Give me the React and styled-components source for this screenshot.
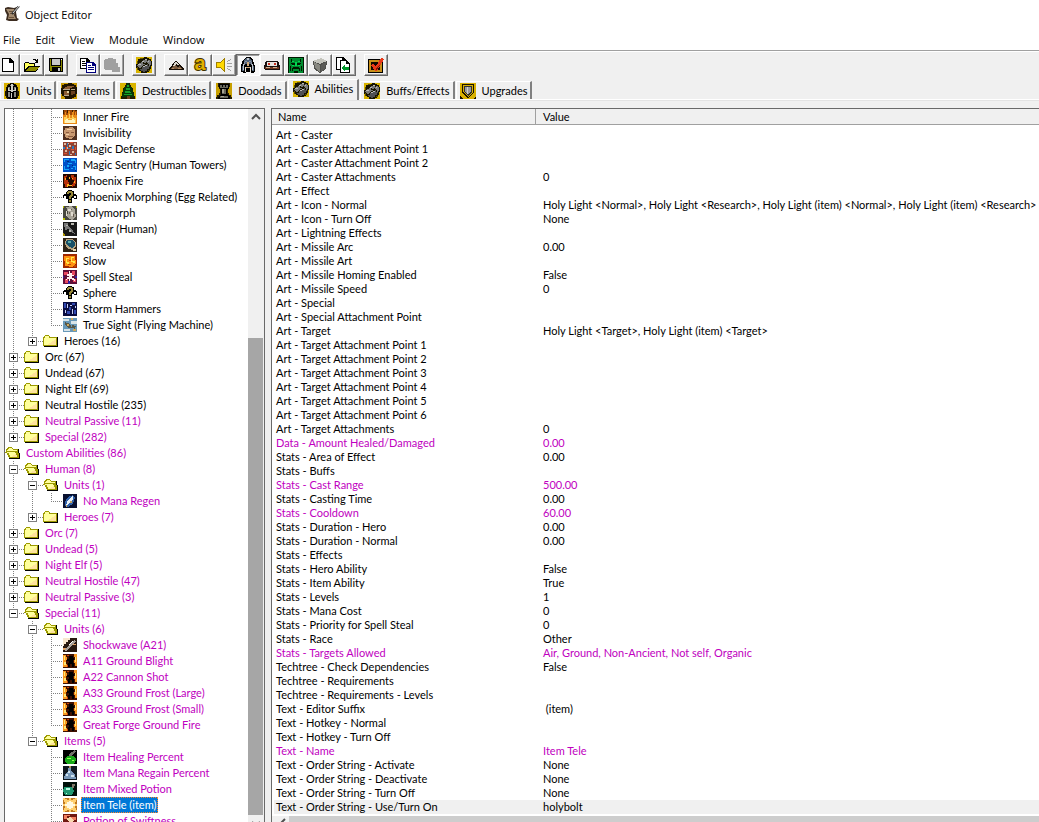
import React, { useState } from "react";
import styled, { createGlobalStyle } from "styled-components";

const OLIVE = "#9c9a00";

/* every drawing is a list of [fill, path] pairs on a small grid */
const toolArt = {
  new: [["#000", "M2 1h8l4 4v10H2z"], ["#fff", "M3 2h6v4h4v8H3z"], ["#000", "M9 2h1v3h3v1H9z"]],
  open: [
    ["#000", "M9 2h3v1h1v-1h1v4h-3v-1h1v-1h-1v-1H9zM0 6h1V5h4v1h6v3h5l-4 6H0z"],
    ["#ffff5a", "M1 6h4v1h5v2H4l-3 4z"],
    ["#8c8a00", "M5 10h10l-3 4H2z"],
  ],
  save: [
    ["#000", "M1 1h14v14H2l-1-1z"],
    ["#8c8a00", "M2 2h1v12H2zM13 3h1v11h-1zM3 9h10v1H3zM3 10h1v4H3z"],
    ["#c8c8c8", "M4 2h8v6H4zM10 11h2v3h-2z"],
    ["#fff", "M13 2h1v1h-1z"],
  ],
  copy: [
    ["#000", "M0 1h7l3 3v8H0z"],
    ["#fff", "M1 2h5v3h3v6H1z"],
    ["#000", "M2 4h3v1H2zM2 6h4v1H2zM2 8h4v1H2z"],
    ["#00007b", "M6 5h7l3 3v8H6z"],
    ["#fff", "M7 6h5v3h3v6H7z"],
    ["#00007b", "M8 8h3v1H8zM8 10h6v1H8zM8 12h6v1H8z"],
  ],
  paste: [["#a0a0a0", "M1 2h3V1h5v1h3v4h2v4h2v5H8v-2H1l-1-1V3z"]],
  fist: [
    ["#181400", "M0 0h16v16H0z"],
    ["#d8b400", "M0 0h8v1H4v1H2v2H1v3H0zM11 0h5v4h-1V2h-2V1h-2zM0 11h1v2h2v1h2v2H0zM15 9h1v7h-5v-1h2v-1h1v-2h1z"],
    ["#605000", "M4 1h3v1H4zM1 4h1v3H1zM14 4h1v3h-1zM1 10h1v3H1zM12 13h2v1h-2z"],
    ["#787878", "M1 8h1V7h1V6h2V5h2v2h2v1H7v1H6v1H5v1H3v-1H2V9H1zM6 4h1V3h2V2h2v2h1v1h-2v1H8V5H6zM12 3h2v1h1v4h-1v1h-1V7h-1V6h-1V5h1z"],
    ["#505054", "M6 10h1V9h2V8h2V7h1v2h2v1h-1v2h-2v2H9v1H7v-1H5v-1H4v-1h2z"],
    ["#b8b8b8", "M2 7h3v1H2zM6 4h2v1H6zM9 2h2v1H9zM12 4h1v1h-1zM7 9h2v1H7zM9 8h2v1H9z"],
  ],
  hill: [
    ["#181008", "M0 12l4-4 3-4h2l3 4 4 4-1 1H1z"],
    ["#7b5c40", "M2 12l3-3 2-1 2 2 3-1 2 3z"],
    ["#dcd8d0", "M7 5h2l2 3H9L8 7 6 9H5z"],
    ["#b48c64", "M4 11h2v1H4zM10 11h3v1h-3z"],
  ],
  sound: [
    ["#a08000", "M0 5h4l5-4v14l-5-4H0z"],
    ["#ffd800", "M1 6h3l4-3v10l-4-3H1z"],
    ["#a0a0a0", "M11 4h1V3h2V2h1v1h-1v1h-2v1h-1zM11 6h5v1h-5zM11 9h5v1h-5zM11 11h1v1h2v1h1v1h-1v-1h-2v-1h-1z"],
  ],
  helmet: [
    ["#000", "M3 3l3-3h4l3 3 2 6v6l-3 1-3-1H7l-3 1-3-1V9z"],
    ["#546478", "M4 4l2-3h4l2 3v3H4zM2 9h2v5H2zM12 9h2v5h-2z"],
    ["#c0c8d0", "M7 1h2v2H7zM3 7h1v6H3zM12 7h1v6h-1z"],
    ["#d0a878", "M7 5h2v4H7zM6 10h4v1H6z"],
    ["#8890a0", "M5 4h2v1H5zM9 4h2v1H9zM4 5h1v3H4zM11 5h1v3h-1z"],
    ["#e8e4dc", "M5 10h1v5H5zM10 10h1v5h-1z"],
  ],
  cards: [
    ["#181010", "M2 4h12l2 5v3l-1 1H1l-1-1V9z"],
    ["#e8e4e0", "M3 5h10v4H3z"],
    ["#c83020", "M4 6h2v2H4zM10 6h2v2h-2z"],
    ["#703820", "M1 10h14v2H1z"],
    ["#d0b090", "M2 10h4v1H2zM9 10h4v1H9z"],
  ],
  face: [
    ["#008c30", "M0 0h16v16H0z"],
    ["#001800", "M0 0h16v1H0zM0 1h1v15H0zM15 1h1v15h-1zM3 2h1v3H3zM12 2h1v3h-1zM3 6h4v2H4V7H3zM9 6h4v1h-1v1H9zM2 9h1v5H2zM13 9h1v5h-1zM4 11h1v-1h6v1h1v3h-1v-2H5v2H4zM6 14h4v2H6z"],
    ["#00d850", "M4 4h2v1H4zM10 4h2v1h-2zM7 5h2v4H7zM4 8h2v1H4zM10 8h2v1h-2z"],
  ],
  cube: [
    ["#50504c", "M1 4l8-3 6 3-1 8-6 4-6-4z"],
    ["#c4c4bc", "M1 4l8-3 6 3-7 3z"],
    ["#888880", "M2 5l6 3v7l-5-4z"],
    ["#5c5c58", "M9 8l5-3-1 7-4 3z"],
  ],
  import: [
    ["#000", "M0 0h7l3 3v10H0z"],
    ["#fff", "M1 1h5v3h3v8H1z"],
    ["#000", "M4 3h6l4 4v9H4z"],
    ["#fff", "M5 4h5v3h3v8H5z"],
    ["#00982c", "M5 11l4-3v2h4v3H9v2z"],
  ],
  check: [
    ["#000", "M0 2h15v14H0z"],
    ["#c89018", "M1 3h13v12H1z"],
    ["#100800", "M3 5h9v8H3z"],
    ["#e83818", "M3 8l2-1 3 2 5-8 3 1-7 12H7z"],
    ["#801808", "M7 12l2 1 4-7-4 4z"],
  ],
};

const tabArt = {
  units: [
    ["#201800", "M0 0h16v16H0z"],
    ["#d8b000", "M0 0h6v1H4v1H3v2H2v4H1v5h1v2h1v1H0zM10 0h6v16h-3v-1h1v-2h1V8h-1V4h-1V2h-1V1h-2z"],
    ["#000", "M3 4l3-3h4l3 3v10l-2 2H5l-2-2z"],
    ["#888880", "M6 2h4v1H6zM4 4h2v3H4zM10 4h2v3h-2zM4 9h2v5H4zM10 9h2v5h-2z"],
    ["#d0d0c8", "M7 1h2v8H7zM4 7h8v1H4zM4 5h1v2H4zM11 5h1v2h-1zM7 10h1v5H7z"],
  ],
  items: [
    ["#201400", "M0 0h16v16H0z"],
    ["#c89800", "M0 0h7v1H3v1H1v3H0zM11 0h5v4h-1V2h-2V1h-2zM0 11h1v2h2v1h1v2H0zM15 11h1v5h-5v-1h2v-1h2z"],
    ["#8c5c34", "M3 5h1V4h2V3h7v1h-2v1H9v1H3zM3 8h5v4H3z"],
    ["#b8a890", "M2 6h7v1H2zM10 6h4v1h-4zM3 12h5v1H3z"],
    ["#6a4020", "M10 8h4v3h-2v1h-2z"],
    ["#e0d0a0", "M6 8h2v2H6z"],
  ],
  tree: [
    ["#241c00", "M0 0h16v16H0z"],
    ["#d8b400", "M0 0h6v2H5v3H3v4H2v4H1v3H0zM10 0h6v16h-1v-3h-1V9h-1V5h-2V2h-1z"],
    ["#083808", "M7 0h2v2h1v2h2v3h1v3h1v4H2v-4h1V7h1V4h2V2h1z"],
    ["#18a028", "M7 2h2v2H7zM6 5h4v2H6zM5 8h5v2H5zM4 11h8v1H4zM10 9h1v1h-1z"],
    ["#704018", "M7 13h3v3H7z"],
  ],
  tower: [
    ["#281e00", "M0 0h16v16H0z"],
    ["#c8a000", "M0 0h2v4h1v2h1v4H3v2H1v2H0zM14 0h2v14h-1v-2h-2v-2h-1V6h1V4h1z"],
    ["#000", "M3 1h10v4l-2 2v4l3 3v2H2v-2l3-3V7L3 5z"],
    ["#68685c", "M4 2h2v2H4zM7 2h2v2H7zM10 2h2v2h-2zM6 6h4v5H6zM4 13h8v2H4zM4 4h8v1H4z"],
    ["#a8a494", "M6 6h2v4H6zM5 13h3v1H5z"],
  ],
  fist: toolArt.fist,
  shield: [
    ["#d8b000", "M0 0h16v16H0z"],
    ["#181200", "M2 1h12v8l-6 7-6-6zM0 13l3 3H0zM16 13v3h-3z"],
    ["#d8b000", "M3 2h10v7l-5 5-5-5z"],
    ["#303030", "M4 3h8v6l-4 4-4-4z"],
    ["#9c9c9c", "M5 4h6v4l-3 4-3-4z"],
    ["#d0d0d0", "M7 4h1v7H7z"],
  ],
};

const spellArt = {
  innerFire: [
    ["#a04808", "M0 0h14v14H0z"],
    ["#e88818", "M0 5h2V2h1v3h2V1h2v4h2V1h2v4h1V2h1v3h1v9H0z"],
    ["#ffd058", "M1 7h2V5h1v3h2V4h1v4h2V5h1v2h1v1h2v5H1z"],
    ["#402000", "M0 0h1v4H0zM4 0h1v3H4zM9 0h1v2H9zM12 0h2v1h-2z"],
    ["#fff4c0", "M3 9h8v1h1v3H2v-3h1z"],
    ["#f0a830", "M5 9h4v1H5z"],
  ],
  invisibility: [
    ["#503020", "M0 0h14v14H0z"],
    ["#c89870", "M2 2l7-1 3 3v5l-4 4-5-1-2-5z"],
    ["#8c5c40", "M3 6h3v1H3zM8 6h3v1H8zM5 10h5v1H5z"],
    ["#f0d0a8", "M4 3h5v1H4zM3 8h3v1H3z"],
  ],
  magicDefense: [
    ["#904030", "M0 0h14v14H0z"],
    ["#e0b8a0", "M1 1h2v2H1zM6 3h2v2H6zM11 1h2v2h-2zM2 8h2v2H2zM9 9h2v2H9zM7 12h2v1H7zM4 5h1v2H4zM12 5h1v1h-1zM5 1h1v1H5z"],
    ["#3078b8", "M4 1h1v4H4zM0 5h2v2H0zM9 4h2v3H9zM6 9h1v4H6zM12 11h1v2h-1zM5 6h2v1H5z"],
    ["#e05030", "M7 0h3v1H7zM3 5h1v3H3zM8 7h3v1H8zM1 11h3v1H1zM12 5h1v3h-1z"],
  ],
  magicSentry: [
    ["#0050c8", "M0 0h14v14H0z"],
    ["#18a8f8", "M1 1h5v1H2v2H1zM8 1h4v1h1v3h-1V3H8zM1 8h1v3h4v1H1zM5 5h4v1H5zM10 8h3v4h-1V9h-2zM4 7h2v2H4zM8 10h2v1H8z"],
    ["#003078", "M4 3h2v1H4zM6 9h1v1H6zM12 12h1v1h-1zM9 7h1v1H9z"],
  ],
  phoenixFire: [
    ["#200800", "M0 0h14v14H0z"],
    ["#b83008", "M1 2h2V1h1v2H3v3h2v2h1v4H4v1H2v-3H1zM8 1h3v2h2v7h-1v2h-2v1H9v-3h1V8h1V6H9V4H8z"],
    ["#ffb020", "M4 10h2v1h3v1H5v1H4zM9 4h1v1H9zM2 4h1v2H2zM11 7h1v2h-1zM6 3h1v2H6z"],
  ],
  question: [
    ["#000", "M4 1h1V0h4v1h2v3h2v1h1v4h-3V8H9v5H5V9H3V8H0V5h1V4h2V2h1z"],
    ["#fff", "M1 6h2v2H1zM11 6h2v2h-2z"],
    ["#988838", "M5 1h4v1h1v4H9v1H8v2H6V6h1V5h1V3H6v1H4V2h1zM6 10h2v2H6z"],
  ],
  polymorph: [
    ["#484840", "M0 0h14v14H0z"],
    ["#a8a498", "M3 1l5-1 4 4 1 7-4 3-5-3 1-5z"],
    ["#e0dcd0", "M5 3h3v2H5zM8 6h2v4H8zM3 5h1v5H3z"],
    ["#685c50", "M6 6h1v2H6zM10 8h1v3h-1zM8 3h1v1H8z"],
    ["#b8c000", "M0 0h1v2H0zM0 12h2v2H0zM13 0h1v2h-1z"],
  ],
  repair: [
    ["#181818", "M0 0h14v14H0z"],
    ["#787878", "M1 1h4v3l4 3 3 5-3-1-4-4-3 1z"],
    ["#b8b8b0", "M3 3h2v1H3zM8 1h3v2H8zM6 8h2v2H6z"],
    ["#a89000", "M0 11h1v1h1v2H0z"],
  ],
  reveal: [
    ["#302418", "M0 0h14v14H0z"],
    ["#b8a480", "M3 1h7l3 4v4l-4 3-5-2-2-4z"],
    ["#185068", "M4 2h5l3 3v3L9 10 5 8 3 5z"],
    ["#58a8a8", "M5 3h3v2H5z"],
    ["#e8d8b0", "M10 11h3v2h-3z"],
  ],
  slow: [
    ["#a02800", "M0 0h14v14H0z"],
    ["#ff9010", "M1 2h11l1 8-4 3-7-1z"],
    ["#ffe848", "M3 4h3v1H4v3h2v2H4V9H3zM8 3h3v1H9v3h3v2h-2V8H8z"],
    ["#c04808", "M6 6h2v1H6zM11 11h2v2h-2zM5 10h3v1H5z"],
  ],
  steal: [
    ["#601038", "M0 0h14v14H0z"],
    ["#e84860", "M1 2h4v3H1zM9 1h3v4H9zM2 9h3v4H2zM10 9h3v3h-3z"],
    ["#fff0f0", "M6 1h1v2h2v2h2v1H9v2h2v1h1v2h-1v-1H9V9H7v2H6V9H4v1H3V9h1V7h2V6H4V4h2z"],
    ["#3020a0", "M5 11h2v3H5zM12 6h2v2h-2zM0 6h1v2H0z"],
  ],
  storm: [
    ["#080c40", "M0 0h14v14H0z"],
    ["#3048b0", "M1 1h2v5H1zM9 1h3v2H9zM4 9h3v3H4zM11 8h2v4h-2zM6 5h2v3H6z"],
    ["#c8d0f8", "M4 2h1v4H4zM7 3h2v1H7zM2 8h1v3H2zM9 7h1v5H9zM12 4h1v2h-1z"],
  ],
  trueSight: [
    ["#6898b8", "M0 0h14v14H0z"],
    ["#d8e4e8", "M0 1h6v2H0zM8 3h6v3H8zM1 11h6v2H1z"],
    ["#585848", "M2 4l5 2 2 4-4 0-3-3zM9 7l4 1-1 3-3-1z"],
    ["#d0a858", "M4 6h2v2H4zM8 0h2v2H8zM10 11h3v2h-3z"],
  ],
  mana: [
    ["#081030", "M0 0h14v14H0z"],
    ["#3060a8", "M2 8l3-5 5-2 2 3-2 6-5 3-3-1z"],
    ["#e8f0f8", "M3 12l1-4 4-5 2-1v3L7 8z"],
    ["#c0a060", "M7 7h2v2H7zM3 11h1v2H3z"],
  ],
  shockwave: [
    ["#281810", "M0 0h14v14H0z"],
    ["#f8e8d0", "M0 0h7v2H5v2H3v2H1v2H0z"],
    ["#a8a098", "M1 12l7-7 4-3 1 2-4 3-6 7z"],
    ["#e0a060", "M0 10h3v1H2v1H0zM10 6h3v1h-3z"],
    ["#fff", "M5 7l4-4h1L6 8z"],
  ],
  flameMan: [
    ["#401000", "M0 0h14v14H0z"],
    ["#f89820", "M0 1h3v2h1v3H3v4h1v3H0zM11 0h3v12h-2V9h-1V6h1V3h-1z"],
    ["#ffe878", "M1 2h1v4H1zM1 8h2v3H1zM12 3h1v5h-1z"],
    ["#c84008", "M4 11h1v2H4zM10 10h1v3h-1zM4 1h2v1H4z"],
    ["#000", "M6 2h4v2h1v2h-1v3h1v4H9v-3H7v3H5V9h1V7H4V5h2z"],
  ],
  healing: [
    ["#000", "M0 0h14v14H0z"],
    ["#707068", "M6 4l6-4 1 2-4 3v2H6z"],
    ["#18a818", "M2 8l3-2h5l3 3-1 4-3 1H5l-3-2z"],
    ["#90ff50", "M4 8h4v1H4zM9 10h2v1H9z"],
  ],
  regain: [
    ["#101820", "M0 0h14v14H0z"],
    ["#7898b8", "M5 2h3v3l4 4 1 4H1l1-5 3-3z"],
    ["#d0e4f0", "M5 5h2v2H5zM3 8h2v2H3zM8 9h3v2H8z"],
    ["#b09050", "M6 0h2v2H6z"],
  ],
  mixed: [
    ["#001008", "M0 0h14v14H0z"],
    ["#209870", "M1 5h8l2 4-2 4H2L0 9z"],
    ["#b8f8e0", "M3 6h4v2H3zM3 11h1v1H3z"],
    ["#807868", "M9 2h3v2h-1v2H9z"],
  ],
  tele: [
    ["#c07820", "M0 0h14v14H0z"],
    ["#ffd070", "M0 0h2v1h2v1h2V0h2v2h2V1h2V0h2v2h-1v2h-1v2h2v2h-2v2h1v2h1v2h-2v-1h-2v-1H8v2H6v-2H4v1H2v1H0v-2h1v-2h1V8H0V6h2V4H1V2H0z"],
    ["#fff8e0", "M6 3h2v1h2v2h2v2h-2v2H8v1H6v-1H4V8H2V6h2V4h2z"],
  ],
  swiftness: [
    ["#701810", "M0 0h14v14H0z"],
    ["#f08060", "M1 1h6v1H4v3H1zM8 3h5v3H9z"],
    ["#f8d8b0", "M3 5l4-2 4 4-3 2z"],
  ],
  folder: [
    ["#000", "M14 4h1v10H1v-1h13z"],
    [OLIVE, "M0 4h1V3h1V2h4v1h1v1h7v9H0z"],
    ["#ffff9c", "M1 5h1V3h4v2h7v7H1z"],
    ["#ffe49c", "M5 11h1v-1h2V9h1V8h2V7h1V6h1v6H5z"],
  ],
  folderOpen: [
    ["#000", "M13 4h1v4h1v6H4v-1h9z"],
    [OLIVE, "M1 4h1V3h1V2h4v1h1v1h5v4h1v5H4v-1H3v-2H2V8H0V7h1z"],
    ["#ffff9c", "M3 4h1V3h3v1h1v1h4v1H2V5h1zM2 7h8v1h1v2h1v2H5v-2H4V8H2z"],
    ["#ffe49c", "M7 11h1v-1h2V9h1v1h1v2H7z"],
  ],
};

const tools = [
  ["new", "open", "save"],
  ["copy", "paste"],
  ["fist"],
  ["hill", "letter", "sound", "helmet", "cards", "face", "cube", "import"],
  ["check"],
];

const tabs = [
  ["Units", "units"],
  ["Items", "items"],
  ["Destructibles", "tree"],
  ["Doodads", "tower"],
  ["Abilities", "fist"],
  ["Buffs/Effects", "fist"],
  ["Upgrades", "shield"],
];

/* guides: | line through, t branch, l last branch, . empty; + and - add the box */
const tree = [
  ["||t", "innerFire", "Inner Fire"],
  ["||t", "invisibility", "Invisibility"],
  ["||t", "magicDefense", "Magic Defense"],
  ["||t", "magicSentry", "Magic Sentry (Human Towers)"],
  ["||t", "phoenixFire", "Phoenix Fire"],
  ["||t", "question", "Phoenix Morphing (Egg Related)"],
  ["||t", "polymorph", "Polymorph"],
  ["||t", "repair", "Repair (Human)"],
  ["||t", "reveal", "Reveal"],
  ["||t", "slow", "Slow"],
  ["||t", "steal", "Spell Steal"],
  ["||t", "question", "Sphere"],
  ["||t", "storm", "Storm Hammers"],
  ["||l", "trueSight", "True Sight (Flying Machine)"],
  ["|l", "folder", "Heroes (16)", 0, "+"],
  ["t", "folder", "Orc (67)", 0, "+"],
  ["t", "folder", "Undead (67)", 0, "+"],
  ["t", "folder", "Night Elf (69)", 0, "+"],
  ["t", "folder", "Neutral Hostile (235)", 0, "+"],
  ["t", "folder", "Neutral Passive (11)", 1, "+"],
  ["l", "folder", "Special (282)", 1, "+"],
  ["", "folderOpen", "Custom Abilities (86)", 1],
  ["t", "folderOpen", "Human (8)", 1, "-"],
  ["|t", "folderOpen", "Units (1)", 1, "-"],
  ["||l", "mana", "No Mana Regen", 1],
  ["|l", "folder", "Heroes (7)", 1, "+"],
  ["t", "folder", "Orc (7)", 1, "+"],
  ["t", "folder", "Undead (5)", 1, "+"],
  ["t", "folder", "Night Elf (5)", 1, "+"],
  ["t", "folder", "Neutral Hostile (47)", 1, "+"],
  ["t", "folder", "Neutral Passive (3)", 1, "+"],
  ["l", "folderOpen", "Special (11)", 1, "-"],
  [".t", "folderOpen", "Units (6)", 1, "-"],
  [".|t", "shockwave", "Shockwave (A21)", 1],
  [".|t", "flameMan", "A11 Ground Blight", 1],
  [".|t", "flameMan", "A22 Cannon Shot", 1],
  [".|t", "flameMan", "A33 Ground Frost (Large)", 1],
  [".|t", "flameMan", "A33 Ground Frost (Small)", 1],
  [".|l", "flameMan", "Great Forge Ground Fire", 1],
  [".l", "folderOpen", "Items (5)", 1, "-"],
  ["..t", "healing", "Item Healing Percent", 1],
  ["..t", "regain", "Item Mana Regain Percent", 1],
  ["..t", "mixed", "Item Mixed Potion", 1],
  ["..t", "tele", "Item Tele (item)", 1],
  ["..l", "swiftness", "Potion of Swiftness", 1],
];

const fields = [
  ["Art - Caster", ""],
  ["Art - Caster Attachment Point 1", ""],
  ["Art - Caster Attachment Point 2", ""],
  ["Art - Caster Attachments", "0"],
  ["Art - Effect", ""],
  ["Art - Icon - Normal", "Holy Light <Normal>, Holy Light <Research>, Holy Light (item) <Normal>, Holy Light (item) <Research>"],
  ["Art - Icon - Turn Off", "None"],
  ["Art - Lightning Effects", ""],
  ["Art - Missile Arc", "0.00"],
  ["Art - Missile Art", ""],
  ["Art - Missile Homing Enabled", "False"],
  ["Art - Missile Speed", "0"],
  ["Art - Special", ""],
  ["Art - Special Attachment Point", ""],
  ["Art - Target", "Holy Light <Target>, Holy Light (item) <Target>"],
  ["Art - Target Attachment Point 1", ""],
  ["Art - Target Attachment Point 2", ""],
  ["Art - Target Attachment Point 3", ""],
  ["Art - Target Attachment Point 4", ""],
  ["Art - Target Attachment Point 5", ""],
  ["Art - Target Attachment Point 6", ""],
  ["Art - Target Attachments", "0"],
  ["Data - Amount Healed/Damaged", "0.00", 1],
  ["Stats - Area of Effect", "0.00"],
  ["Stats - Buffs", ""],
  ["Stats - Cast Range", "500.00", 1],
  ["Stats - Casting Time", "0.00"],
  ["Stats - Cooldown", "60.00", 1],
  ["Stats - Duration - Hero", "0.00"],
  ["Stats - Duration - Normal", "0.00"],
  ["Stats - Effects", ""],
  ["Stats - Hero Ability", "False"],
  ["Stats - Item Ability", "True"],
  ["Stats - Levels", "1"],
  ["Stats - Mana Cost", "0"],
  ["Stats - Priority for Spell Steal", "0"],
  ["Stats - Race", "Other"],
  ["Stats - Targets Allowed", "Air, Ground, Non-Ancient, Not self, Organic", 1],
  ["Techtree - Check Dependencies", "False"],
  ["Techtree - Requirements", ""],
  ["Techtree - Requirements - Levels", ""],
  ["Text - Editor Suffix", " (item)"],
  ["Text - Hotkey - Normal", ""],
  ["Text - Hotkey - Turn Off", ""],
  ["Text - Name", "Item Tele", 1],
  ["Text - Order String - Activate", "None"],
  ["Text - Order String - Deactivate", "None"],
  ["Text - Order String - Turn Off", "None"],
  ["Text - Order String - Use/Turn On", "holybolt"],
];

const Art = ({ shapes, size = 16 }) => (
  <svg width={size} height={size} viewBox={`0 0 ${size} ${size}`} shapeRendering="crispEdges" aria-hidden="true">
    {shapes.map(([fill, d], i) => (
      <path key={i} fill={fill} d={d} />
    ))}
  </svg>
);

const Chevron = ({ d }) => (
  <svg width="10" height="10" viewBox="0 0 10 10" aria-hidden="true">
    <path d={d} fill="none" stroke="#505050" strokeWidth="2" />
  </svg>
);

const Scroll = () => (
  <svg width="16" height="16" viewBox="0 0 16 16" aria-hidden="true">
    <path d="M1 2l3-1 6 1 3-1-1 5 1 6 2 1-2 2H5l-3-1 1-5-2-4z" fill="#3c2c20" />
    <path d="M2 3l8 0 1 3-1 3 2 4H4l1-5z" fill="#a48c70" />
    <path d="M5 5h4v1H5zM6 7h4v1H6zM5 11h5v1H5z" fill="#6c543c" />
    <path d="M15 0L8 8" stroke="#303030" strokeWidth="2" />
    <path d="M15 0L9 7" stroke="#d8d8d8" strokeWidth="1" />
  </svg>
);

export default function App() {
  const [tab, setTab] = useState("Abilities");
  const [tool, setTool] = useState("helmet");
  const [node, setNode] = useState("Item Tele (item)");
  const [field, setField] = useState("Text - Order String - Use/Turn On");

  return (
    <Window>
      <GlobalStyle />
      <TitleBar>
        <Scroll />
        <h1>Object Editor</h1>
      </TitleBar>
      <MenuBar>
        {["File", "Edit", "View", "Module", "Window"].map((name) => (
          <button key={name}>{name}</button>
        ))}
      </MenuBar>
      <Toolbar>
        {tools.map((group) => (
          <ToolGroup key={group[0]}>
            {group.map((name) => (
              <ToolButton
                key={name}
                aria-label={name}
                $pressed={name === tool}
                onClick={() => setTool(name)}
              >
                {name === "letter" ? <Letter>a</Letter> : <Art shapes={toolArt[name]} />}
              </ToolButton>
            ))}
          </ToolGroup>
        ))}
      </Toolbar>
      <TabBar role="tablist">
        {tabs.map(([name, art]) => (
          <Tab
            key={name}
            role="tab"
            aria-selected={name === tab}
            $active={name === tab}
            onClick={() => setTab(name)}
          >
            <Art shapes={tabArt[art]} />
            {name}
          </Tab>
        ))}
      </TabBar>
      <Page>
        <TreePane>
          <Tree>
            {tree.map(([guides, art, label, custom, box], i) => (
              <TreeRow key={i} $custom={custom}>
                {guides.split("").map((kind, n) => (
                  <Guide key={n} $kind={kind}>
                    {box && n === guides.length - 1 && (
                      <Expander aria-label={`Toggle ${label}`} $closed={box === "+"} />
                    )}
                  </Guide>
                ))}
                <NodeIcon>
                  <Art shapes={spellArt[art]} size={art.startsWith("folder") ? 16 : 14} />
                </NodeIcon>
                <NodeLabel $selected={label === node} onClick={() => setNode(label)}>
                  {label}
                </NodeLabel>
              </TreeRow>
            ))}
          </Tree>
          <VScroll>
            <Chevron d="M1 7l4-4 4 4" />
            <Thumb />
            <Chevron d="M1 4l4 4 4-4" />
          </VScroll>
        </TreePane>
        <FieldPane>
          <FieldTable>
            <thead>
              <tr>
                <th scope="col">Name</th>
                <th scope="col">Value</th>
              </tr>
            </thead>
            <tbody>
              {fields.map(([name, value, custom]) => (
                <FieldRow
                  key={name}
                  $custom={custom}
                  $selected={name === field}
                  onClick={() => setField(name)}
                >
                  <td>{name}</td>
                  <td>{value}</td>
                </FieldRow>
              ))}
            </tbody>
          </FieldTable>
          <HScroll>
            <Chevron d="M9 3l-4 4 4 4" />
            <HThumb />
          </HScroll>
        </FieldPane>
      </Page>
    </Window>
  );
}

const GlobalStyle = createGlobalStyle`
  body {
    margin: 0;
    background: #f0f0f0;
  }

  button {
    margin: 0;
    padding: 0;
    border: 0;
    background: none;
    color: inherit;
    font: inherit;
  }

  svg {
    display: block;
    flex: none;
  }
`;

const Window = styled.div`
  display: flex;
  flex-direction: column;
  height: 100vh;
  overflow: hidden;
  background: #f0f0f0;
  color: #000;
  font-family: Lato, "Liberation Sans", Arial, sans-serif;
  font-size: 11px;
  line-height: 14px;
`;

const TitleBar = styled.header`
  display: flex;
  align-items: center;
  flex: none;
  gap: 5px;
  height: 28px;
  padding-left: 4px;
  background: #fff;

  h1 {
    margin: 0;
    font: 11px "Open Sans", "Noto Sans", sans-serif;
  }
`;

const MenuBar = styled.nav`
  display: flex;
  align-items: center;
  flex: none;
  gap: 15px;
  height: 22px;
  padding-left: 3px;
  background: #fff;
  font: 11px "Open Sans", "Noto Sans", sans-serif;
`;

const Toolbar = styled.div`
  display: flex;
  flex: none;
  gap: 8px;
  margin-left: -4px;
  padding: 3px 0;
  border-top: 1px solid #a0a0a0;
  box-shadow: inset 0 1px #fff;
`;

const ToolGroup = styled.div`
  display: flex;
`;

const ToolButton = styled.button`
  display: grid;
  place-items: center;
  box-sizing: border-box;
  width: 24px;
  height: 22px;
  border: 1px solid;
  border-color: ${(p) => (p.$pressed ? "#696969 #fff #fff #696969" : "#fff #696969 #696969 #fff")};
  background: ${(p) => (p.$pressed ? "#f8f8f8" : "#f0f0f0")};
  box-shadow: inset ${(p) => (p.$pressed ? "1px 1px" : "-1px -1px")} #a0a0a0;
`;

const Letter = styled.span`
  height: 18px;
  color: #e0b000;
  font: bold 20px/14px "Liberation Sans", sans-serif;
  -webkit-text-stroke: 2px #403000;
  paint-order: stroke;
`;

const TabBar = styled.div`
  display: flex;
  align-items: flex-end;
  flex: none;
  gap: 1px;
  height: 20px;
`;

const Tab = styled.button`
  display: flex;
  align-items: center;
  gap: 6px;
  box-sizing: border-box;
  height: ${(p) => (p.$active ? 21 : 18)}px;
  margin-bottom: ${(p) => (p.$active ? -1 : 0)}px;
  padding: ${(p) => (p.$active ? "0 4px 3px" : "0 3px")};
  border: solid #fff;
  border-width: 1px 2px 0 1px;
  border-right-color: #808080;
  background: #f0f0f0;
  z-index: ${(p) => (p.$active ? 1 : 0)};
`;

const Page = styled.main`
  display: flex;
  flex: 1;
  gap: 6px;
  min-height: 0;
  padding: 8px 0 0 4px;
  border-top: 1px solid #fff;
  box-shadow: inset 0 1px #e3e3e3;
`;

const TreePane = styled.section`
  display: flex;
  flex: none;
  box-sizing: border-box;
  width: 261px;
  border: solid #696969;
  border-width: 1px 1px 0;
  background: #fff;
`;

const Tree = styled.ul`
  flex: 1;
  min-width: 0;
  margin: 0;
  padding: 0;
  overflow: hidden;
  list-style: none;
`;

const TreeRow = styled.li`
  display: flex;
  align-items: center;
  height: 16px;
  color: ${(p) => (p.$custom ? "#c000c0" : "#000")};
  white-space: nowrap;
`;

const dots = (dir) => `repeating-linear-gradient(${dir}, #808080 0 1px, transparent 1px 2px)`;
const guides = {
  "|": `${dots("to bottom")} 8px 0 / 1px 16px no-repeat`,
  t: `${dots("to bottom")} 8px 0 / 1px 16px no-repeat, ${dots("to right")} 8px 8px / 11px 1px no-repeat`,
  l: `${dots("to bottom")} 8px 0 / 1px 8px no-repeat, ${dots("to right")} 8px 8px / 11px 1px no-repeat`,
  ".": "none",
};

const Guide = styled.span`
  flex: none;
  box-sizing: border-box;
  width: 19px;
  height: 16px;
  padding: 4px 0 0 4px;
  background: ${(p) => guides[p.$kind]};
`;

const Expander = styled.button`
  display: block;
  box-sizing: border-box;
  width: 9px;
  height: 9px;
  border: 1px solid #808080;
  background:
    linear-gradient(#000, #000) center / 5px 1px no-repeat,
    linear-gradient(#000, #000) center / 1px ${(p) => (p.$closed ? 5 : 0)}px no-repeat,
    #fff;
`;

const NodeIcon = styled.span`
  display: grid;
  place-items: center;
  flex: none;
  width: 16px;
  height: 16px;
  margin-right: 3px;
`;

const NodeLabel = styled.button`
  padding: 0 1px;
  line-height: 14px;
  border: 1px dotted ${(p) => (p.$selected ? "#ff8728" : "transparent")};
  background: ${(p) => (p.$selected ? "#0078d7" : "none")};
  color: ${(p) => (p.$selected ? "#fff" : "inherit")};
`;

const VScroll = styled.div`
  display: grid;
  grid-template-rows: 16px 213fr 477fr 7px;
  justify-items: center;
  flex: none;
  width: 16px;
  overflow: hidden;
  background: #f0f0f0;

  svg {
    margin-top: 3px;
  }

  svg:last-child {
    grid-row: 4;
  }
`;

const Thumb = styled.div`
  grid-row: 3;
  justify-self: stretch;
  margin-right: 1px;
  background: #a6a6a6;
`;

const FieldPane = styled.section`
  flex: 1;
  min-width: 0;
  overflow: hidden;
  border: solid #696969;
  border-width: 1px 0 0 1px;
  background: #fff;
`;

const FieldTable = styled.table`
  width: 100%;
  table-layout: fixed;
  border-spacing: 0;
  text-align: left;
  white-space: pre;

  th {
    box-sizing: border-box;
    height: 16px;
    padding: 1px 7px;
    border-bottom: 1px solid #a0a0a0;
    background: #f0f0f0;
    font-weight: 400;
    line-height: 13px;
  }

  th:first-child {
    width: 264px;
    padding: 1px 6px;
    border-right: 1px solid #a0a0a0;
  }

  tbody::before {
    content: "";
    display: block;
    height: 3px;
  }
`;

const FieldRow = styled.tr`
  color: ${(p) => (p.$custom ? "#c000c0" : "#000")};

  td {
    height: 14px;
    padding: 0 0 0 7px;
    background: ${(p) => (p.$selected ? "#f0f0f0" : "#fff")};
  }

  td:first-child {
    padding-left: 2px;
    border-left: 2px solid #fff;
  }
`;

const HScroll = styled.div`
  display: flex;
  height: 17px;
  margin-top: 2px;
  padding-left: 4px;
  background: #f0f0f0;
`;

const HThumb = styled.div`
  flex: 1;
  margin-left: 3px;
  background: #cdcdcd;
`;
